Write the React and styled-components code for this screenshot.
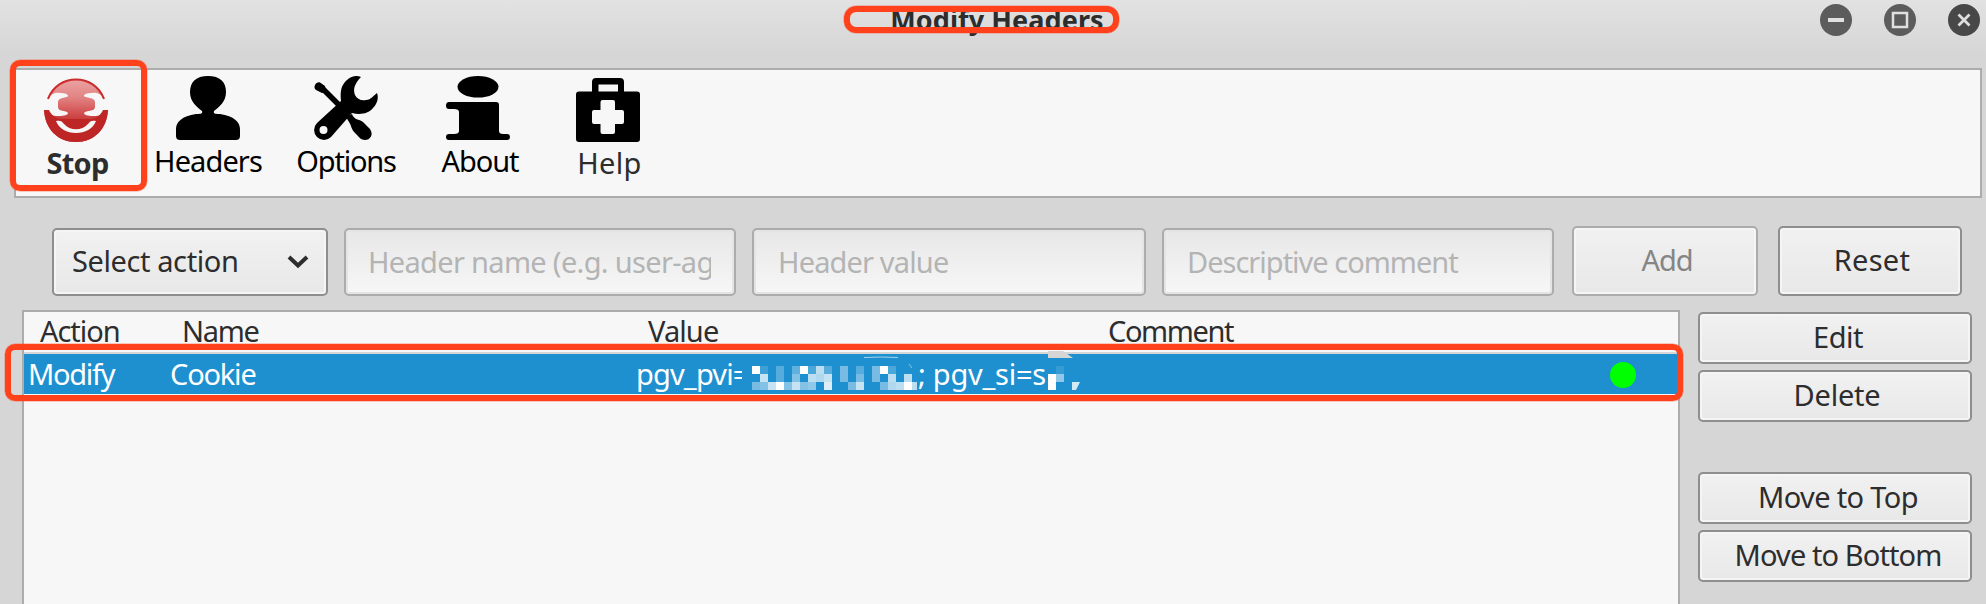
import React from "react";
import styled, { createGlobalStyle } from "styled-components";

const Global = createGlobalStyle`
  * { box-sizing: border-box; }
  body { margin: 0; background: #d6d6d6; overflow: hidden; }
  button, input { font: inherit; margin: 0; }
`;

const Window = styled.div`
  position: relative;
  width: 1986px;
  height: 604px;
  overflow: hidden;
  background: linear-gradient(#e2e2e2, #d6d6d6 54px, #d6d6d6 100%);
  color: #2d2d2d;
  font-family: "Noto Sans", "Open Sans", sans-serif;
  font-size: 29px;
  line-height: 38px;
  white-space: nowrap;
`;

const Track = styled.span`
  padding-left: ${(p) => p.$shift || 0}px;
  letter-spacing: ${(p) => p.$v || 0}px;
`;

const TitleBar = styled.header`
  display: grid;
  grid-template-columns: 1fr auto 1fr;
  height: 68px;
  padding: 0 6px 0 14px;
`;

const Title = styled.h1`
  grid-column: 2;
  margin: 1px 0 0;
  font-size: 27px;
  font-weight: 700;
  letter-spacing: 0.1px;
`;

const Controls = styled.div`
  display: flex;
  justify-content: flex-end;
  gap: 32px;
  padding-top: 4px;
`;

const ToolBar = styled.nav`
  display: flex;
  width: 1968px;
  height: 130px;
  margin-left: 14px;
  border: 2px solid #acacac;
  background: #f7f7f7;
`;

const Tool = styled.div`
  display: flex;
  flex-direction: column;
  align-items: center;
  gap: 2px;
  width: ${(p) => p.$w}px;
  padding-top: ${(p) => p.$top || 6}px;
  color: ${(p) => p.$color || "#000"};
  font-weight: ${(p) => (p.$bold ? 700 : 400)};
`;

const Glyph = styled.svg`
  display: block;
  flex: none;
`;

const Form = styled.div`
  display: flex;
  align-items: flex-end;
  height: 98px;
  padding-left: 52px;
`;

const Select = styled.div`
  display: flex;
  justify-content: space-between;
  align-items: center;
  width: 276px;
  height: 68px;
  margin-right: 16px;
  padding: 0 17px 2px 18px;
  border: 2px solid #8e8e8e;
  border-radius: 5px;
  background: linear-gradient(#f1f1f1, #e8e8e8);
  box-shadow: inset 0 0 0 2px #f5f5f5;
`;

const Chevron = styled(Glyph)`
  margin-top: 2px;
`;

const Field = styled.input`
  width: ${(p) => p.$w}px;
  height: 68px;
  margin-right: ${(p) => p.$gap}px;
  padding: 0 23px 2px ${(p) => p.$pad || 22}px;
  border: 2px solid #acacac;
  border-radius: 5px;
  outline: none;
  background: linear-gradient(#e7e7e7, #f7f7f7);
  box-shadow: inset 0 0 0 2px #e4e4e4;
  letter-spacing: ${(p) => p.$v}px;
  &::placeholder { color: #b4b4b4; opacity: 1; }
`;

const Button = styled.button`
  width: ${(p) => p.$w}px;
  height: ${(p) => p.$h}px;
  padding: 0 0 2px ${(p) => p.$shift || 0}px;
  border: 2px solid #8e8e8e;
  border-radius: 5px;
  background: linear-gradient(#f1f1f1, #e8e8e8);
  box-shadow: inset 0 0 0 2px #f5f5f5;
  color: #2d2d2d;
  line-height: 38px;
  letter-spacing: ${(p) => p.$v || 0}px;
  &:disabled { border-color: #acacac; color: #858585; }
`;

const FormButtons = styled.div`
  display: flex;
  gap: 20px;
`;

const Body = styled.main`
  display: flex;
  align-items: flex-start;
  gap: 18px;
  padding: 14px 0 0 22px;
`;

const Table = styled.section`
  width: 1658px;
  height: 300px;
  border: 2px solid #acacac;
  background: #f7f7f7;
`;

const Row = styled.div`
  display: grid;
  grid-template-columns: 141px 467px 460px 1fr;
  align-items: center;
`;

const HeadRow = styled(Row)`
  height: 42px;
  padding: 0 0 2px 16px;
  border-bottom: 2px solid #d6d6d6;
`;

const DataRow = styled(Row)`
  height: 40px;
  padding-left: 4px;
  background: #1e90d0;
  color: #fff;
`;

const ValueCell = styled.div`
  display: flex;
  align-items: center;
  height: 40px;
`;

const ValuePart = styled(Track)`
  width: ${(p) => p.$w}px;
  flex: none;
`;

const StatusDot = styled.i`
  justify-self: end;
  width: 26px;
  height: 26px;
  margin: 2px 42px 0 0;
  border-radius: 50%;
  background: #0f0;
`;

const Side = styled.aside`
  display: flex;
  flex-direction: column;
  gap: 6px;
  padding-top: 2px;
`;

const Spacer = styled.div`
  height: 38px;
`;

const Outline = styled.div`
  position: absolute;
  left: ${(p) => p.$x}px;
  top: ${(p) => p.$y}px;
  width: ${(p) => p.$w}px;
  height: ${(p) => p.$h}px;
  border: 6px solid #ff421b;
  border-radius: ${(p) => p.$r}px;
  box-shadow: 0 0 0 0.5px rgba(255, 66, 27, 0.5);
  pointer-events: none;
`;

const StopIcon = () => (
  <Glyph width="64" height="64" viewBox="0 0 64 64">
    <defs>
      <linearGradient id="red" x1="0" y1="0" x2="0" y2="64" gradientUnits="userSpaceOnUse">
        <stop offset="0" stopColor="#eba5a5" />
        <stop offset="0.3" stopColor="#e28484" />
        <stop offset="0.5" stopColor="#d65a5a" />
        <stop offset="0.66" stopColor="#c73a3a" />
        <stop offset="0.72" stopColor="#bd2a2a" />
        <stop offset="1" stopColor="#bb2424" />
      </linearGradient>
    </defs>
    <path
      fill="url(#red)"
      d="M3 21C8 8 19 1 32 1S56 8 61 21C56 15 52 14.500 48 15C43 15 40 16 40 18C41 20 51 19 51 24V29C51 34 42 32 40 35C40 37 44 38 49 38C56 38 61 36 61 32H64C63 51 50 64 32 64S1 51 0 32H3C3 36 8 38 15 38C20 38 24 37 24 35C22 32 14 34 14 29V24C14 19 23 20 24 18C24 16 21 15 16 15C12 14.500 8 15 3 21Z"
    />
    <path fill="#be2626" d="M0 32H5C7 37 12 41 19 41H45C52 41 57 37 59 32H64C63 51 50 64 32 64S1 51 0 32Z" />
    <path fill="#f7f7f7" d="M12 43C16 42 18 43 20 46C26 53 38 53 44 46C46 43 48 42 52 43C49 51 41 55 32 55S15 51 12 43Z" />
    <path fill="none" stroke="#cc2c2c" strokeWidth="2" d="M4 21C9 8 20 1.500 32 1.500S55 8 60 21" />
  </Glyph>
);

const HeadersIcon = () => (
  <Glyph width="64" height="64" viewBox="0 0 64 64">
    <path d="M32 0C44 0 50 6 50 16C50 26 43 31 38 35C37 38 40 38 44 38C58 40 64 46 64 53V60Q64 64 60 64H4Q0 64 0 60V53C0 46 6 40 20 38C24 38 27 38 26 35C21 31 14 26 14 16C14 6 20 0 32 0Z" />
  </Glyph>
);

const OptionsIcon = () => (
  <Glyph width="64" height="64" viewBox="0 0 64 64">
    <path d="M7 11L27 31" stroke="#000" strokeWidth="5.500" />
    <path d="M1 9C2 7 4 6 6 6.500L11 10L12 16L8 17L2 14C0.500 13 0 11 1 9Z" />
    <path d="M32 41L38 38C40 44 45 43 49 46L56 53C60 59 56 64 51 64C47 64 45 61 42 58C36 52 38 50 35 46Z" />
    <path
      fillRule="evenodd"
      d="M47 1C43 -1 37 0 33 4C27 9 26 16 27 25L3 47A9.800 9.800 0 0 0 17 61L38 37C46 39 54 38 59 32C63 28 65 22 63 17C60 19 57 24 52 24C47 25 43 23 41 19C38 12 43 5 47 1ZM9.500 50A4 4 0 1 1 9.500 58A4 4 0 1 1 9.500 50Z"
    />
  </Glyph>
);

const AboutIcon = () => (
  <Glyph width="64" height="64" viewBox="0 0 64 64">
    <ellipse cx="32" cy="10.800" rx="20.500" ry="10.800" />
    <path d="M3 26H50Q53 26 53 29V55Q53 58 57 58H61Q64 58 64 61T61 64H3Q0 64 0 61T3 58H8Q13 58 13 55V36Q13 33 8 33H3Q0 33 0 29.500T3 26Z" />
  </Glyph>
);

const HelpIcon = () => (
  <Glyph width="64" height="64" viewBox="0 0 64 64">
    <path
      fillRule="evenodd"
      d="M20 0H44Q48 0 48 4V13.500H61Q64 13.500 64 16.500V61Q64 64 61 64H3Q0 64 0 61V16.500Q0 13.500 3 13.500H16V4Q16 0 20 0ZM22.500 6.500V13.500H42V6.500ZM26.500 22Q24.500 22 24.500 24V32H18Q16 32 16 34V44Q16 46 18 46H24.500V54Q24.500 56 26.500 56H37Q39 56 39 54V46H46Q48 46 48 44V34Q48 32 46 32H39V24Q39 22 37 22Z"
    />
  </Glyph>
);

const controlShapes = {
  minimize: <path d="M8 16H24" stroke="#e0e0e0" strokeWidth="4" />,
  maximize: <rect x="9" y="9" width="14" height="14" fill="none" stroke="#e0e0e0" strokeWidth="2.500" />,
  close: <path d="M10.500 10.500L21.500 21.500M21.500 10.500L10.500 21.500" stroke="#dedede" strokeWidth="2.800" />,
};

const Control = ({ kind }) => (
  <Glyph width="32" height="32" viewBox="0 0 32 32">
    <circle cx="16" cy="16" r="16" fill={kind === "close" ? "#484848" : "#5c5c5c"} />
    {controlShapes[kind]}
  </Glyph>
);

// Opacity of each censor block, row by row, in 8px cells.
const censorRows = [
  [1, 0.15, 0, 0.25, 0, 0.3, 1, 0.2, 0.7, 0.25, 0, 0.4, 0, 0.25, 0, 0.4, 1, 0.2, 0, 0, 0],
  [0, 0.75, 0, 0.25, 0, 0.45, 0, 0.7, 0.65, 0.75, 0, 0.4, 0, 0.4, 0, 0.4, 0, 0.7, 0, 0.7, 0],
  [0.4, 0.45, 0.75, 1, 0.45, 0.75, 0.45, 0.5, 0, 0.85, 0, 0, 0.4, 0.75, 0, 0, 0.4, 0.65, 0.7, 1, 0.7],
];

const CensoredNumber = () => (
  <Glyph width="176" height="40" viewBox="742 354 176 40">
    <path d="M742 354H920L916 366V394H742Z" fill="#1e90d0" />
    {censorRows.map((row, y) =>
      row.map((o, x) =>
        o ? <rect key={`${x}-${y}`} x={752 + x * 8} y={366 + y * 8} width={x === 20 ? 5 : 8} height="8" fill="#fff" fillOpacity={o} shapeRendering="crispEdges" /> : null
      )
    )}
    <path d="M864 357.500Q880 356.500 898 357.500" stroke="#a6d2ec" fill="none" />
    <path d="M909 364L912 368" stroke="#8cc4e6" />
  </Glyph>
);

const CensoredTail = () => (
  <Glyph width="36" height="40" viewBox="1048 354 36 40" overflow="visible">
    <path d="M1048 351H1063L1073 358H1048Z" fill="#d6d6d6" />
    <rect x="1048" y="374" width="8" height="16" fill="#fff" />
    <rect x="1056" y="366" width="8" height="8" fill="#fff" fillOpacity="0.1" />
    <rect x="1056" y="374" width="8" height="8" fill="#fff" fillOpacity="0.5" />
    <path d="M1072 382H1080L1076 390H1072Z" fill="#fff" fillOpacity="0.8" />
  </Glyph>
);

const tools = [
  { label: "Stop", icon: <StopIcon />, w: 120, top: 8, bold: true, color: "#2d2d2d", v: -0.7, shift: 3 },
  { label: "Headers", icon: <HeadersIcon />, w: 144, v: -0.9 },
  { label: "Options", icon: <OptionsIcon />, w: 132, v: -1.2 },
  { label: "About", icon: <AboutIcon />, w: 132, v: -1.05, shift: 4 },
  { label: "Help", icon: <HelpIcon />, w: 128, top: 8, color: "#2d2d2d", v: 0.3, shift: 3 },
];

export default function App() {
  return (
    <Window>
      <Global />
      <TitleBar>
        <Title>Modify Headers</Title>
        <Controls>
          <Control kind="minimize" />
          <Control kind="maximize" />
          <Control kind="close" />
        </Controls>
      </TitleBar>
      <ToolBar>
        {tools.map((t) => (
          <Tool key={t.label} $w={t.w} $top={t.top} $bold={t.bold} $color={t.color}>
            {t.icon}
            <Track $v={t.v} $shift={t.shift}>{t.label}</Track>
          </Tool>
        ))}
      </ToolBar>
      <Form>
        <Select>
          <Track $v={-0.4}>Select action</Track>
          <Chevron width="22" height="14" viewBox="0 0 22 14">
            <path d="M2 2L11 10.500L20 2" fill="none" stroke="#2d2d2d" strokeWidth="4" />
          </Chevron>
        </Select>
        <Field $w={392} $gap={16} $v={-0.68} placeholder="Header name (e.g. user-agent)" />
        <Field $w={394} $gap={16} $pad={24} $v={-0.85} placeholder="Header value" />
        <Field $w={392} $gap={18} $pad={23} $v={-1} placeholder="Descriptive comment" />
        <FormButtons>
          <Button $w={186} $h={70} $v={-1} $shift={4} disabled>Add</Button>
          <Button $w={184} $h={70} $v={0.3} $shift={4}>Reset</Button>
        </FormButtons>
      </Form>
      <Body>
        <Table>
          <HeadRow>
            <Track $v={-1.05}>Action</Track>
            <Track $v={-1.3} $shift={1}>Name</Track>
            <Track $v={-0.9}>Value</Track>
            <Track $v={-1.4}>Comment</Track>
          </HeadRow>
          <DataRow>
            <Track $v={-1.3}>Modify</Track>
            <Track $v={-1.2} $shift={1}>Cookie</Track>
            <ValueCell>
              <ValuePart $v={-0.85} $w={106}>pgv_pvi=</ValuePart>
              <CensoredNumber />
              <ValuePart $v={-0.25} $w={130} $shift={-3}>; pgv_si=s</ValuePart>
              <CensoredTail />
            </ValueCell>
            <StatusDot />
          </DataRow>
        </Table>
        <Side>
          <Button $w={274} $h={52} $v={-0.5} $shift={6}>Edit</Button>
          <Button $w={274} $h={52} $v={-0.2} $shift={4}>Delete</Button>
          <Spacer />
          <Button $w={274} $h={52} $v={-0.65} $shift={6}>Move to Top</Button>
          <Button $w={274} $h={52} $v={-0.9} $shift={6}>Move to Bottom</Button>
        </Side>
      </Body>
      <Outline $x={844} $y={5.5} $w={275} $h={27} $r={12} />
      <Outline $x={9.5} $y={59.500} $w={137} $h={131} $r={10} />
      <Outline $x={4.500} $y={343.500} $w={1678} $h={57.500} $r={10} />
    </Window>
  );
}
